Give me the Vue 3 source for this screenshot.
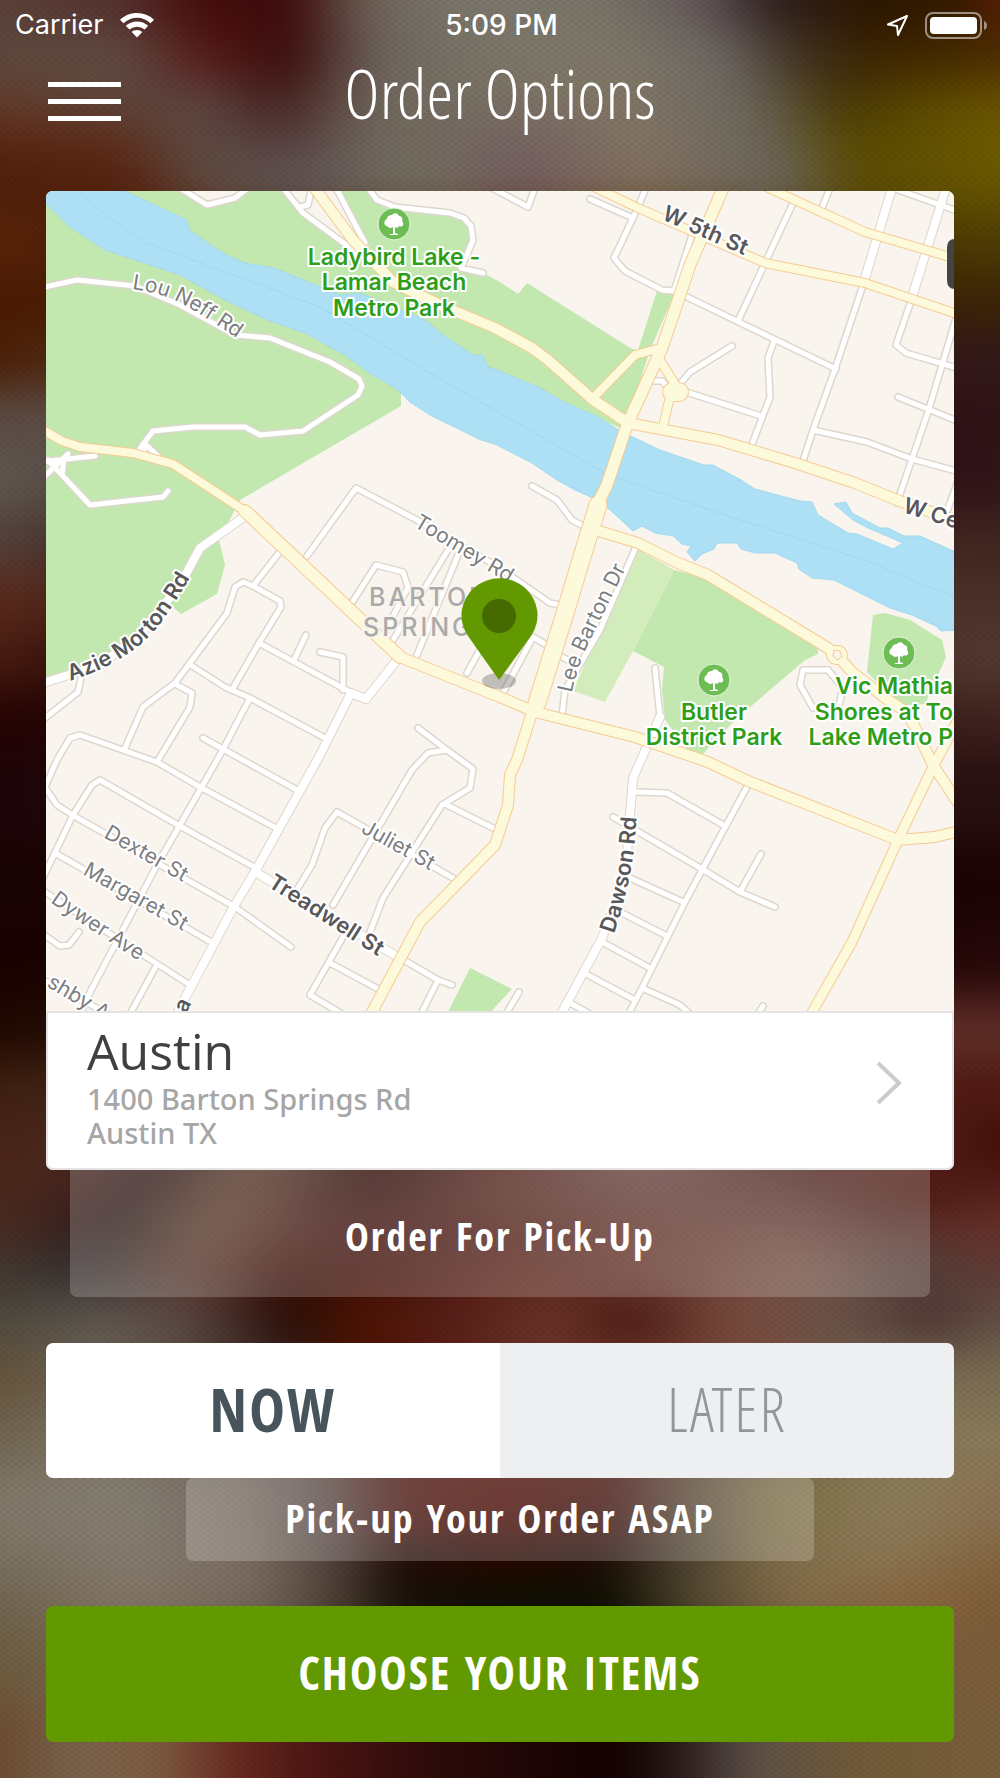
<script setup>
import { ref } from 'vue'

const when = ref('now')

// Backdrop photo colours: [band height, [[x position, colour], ...]]
const backdrop = [
  [90, [[0, '#5a4038'], [120, '#54302c'], [200, '#450c0c'], [290, '#3c0a0a'], [370, '#6e6258'], [460, '#7b766b'], [600, '#7a7468'], [700, '#625658'], [770, '#302020'], [860, '#2a1500'], [960, '#321a00'], [1000, '#5a1e05']]],
  [50, [[0, '#5c483e'], [120, '#604c42'], [200, '#581c1a'], [290, '#3a0c0a'], [380, '#6e6660'], [500, '#7b7668'], [620, '#7e7868'], [720, '#6e6864'], [800, '#403020'], [870, '#3c2400'], [1000, '#4a2c00']]],
  [40, [[0, '#643c2c'], [100, '#5e463c'], [200, '#5e4440'], [280, '#45201e'], [380, '#70685c'], [500, '#7a7264'], [620, '#827666'], [740, '#6e6860'], [840, '#463608'], [930, '#5c4800'], [1000, '#6a5200']]],
  [40, [[0, '#5c2814'], [110, '#5e2c18'], [190, '#5e4c44'], [290, '#543c3c'], [380, '#726a5e'], [520, '#746260'], [640, '#827464'], [760, '#6c665c'], [850, '#564800'], [1000, '#6e5c00']]],
  [50, [[0, '#4c1e0a'], [130, '#562210'], [210, '#604c42'], [300, '#62585a'], [420, '#747060'], [520, '#745c60'], [640, '#826f5f'], [780, '#6c665c'], [860, '#5c4c04'], [1000, '#6a5700']]],
  [60, [[0, '#5a2408'], [100, '#4c1e08'], [900, '#4a3800'], [1000, '#4f3d04']]],
  [60, [[0, '#4a1a02'], [100, '#4a1c06'], [900, '#3a2206'], [1000, '#3c2406']]],
  [60, [[0, '#4c1f05'], [100, '#50301c'], [900, '#34181c'], [1000, '#321818']]],
  [60, [[0, '#5c4a44'], [100, '#5c504c'], [900, '#301014'], [1000, '#2f1216']]],
  [60, [[0, '#605850'], [100, '#564842'], [900, '#2c1016'], [1000, '#2f1417']]],
  [60, [[0, '#54423a'], [100, '#402c2c'], [900, '#422420'], [1000, '#40241f']]],
  [60, [[0, '#5a2a1c'], [100, '#4a2418'], [900, '#4a2f29'], [1000, '#4a3029']]],
  [60, [[0, '#481c10'], [100, '#300c0a'], [900, '#50362e'], [1000, '#523830']]],
  [60, [[0, '#260302'], [100, '#200404'], [900, '#3c1e1c'], [1000, '#40221e']]],
  [90, [[0, '#1e0408'], [100, '#1e060a'], [900, '#2a1010'], [1000, '#281010']]],
  [90, [[0, '#1a0303'], [100, '#180202'], [900, '#1a0203'], [1000, '#1c0304']]],
  [70, [[0, '#180200'], [100, '#1a0300'], [900, '#220506'], [1000, '#280808']]],
  [60, [[0, '#200800'], [100, '#241008'], [900, '#602e28'], [1000, '#602e28']]],
  [60, [[0, '#40200f'], [100, '#40241c'], [900, '#501a12'], [1000, '#501a12']]],
  [50, [[0, '#4a2416'], [100, '#4a2a24'], [170, '#2c1514'], [260, '#58402e'], [370, '#280504'], [500, '#4c1c12'], [640, '#6f4a47'], [800, '#4a1d16'], [900, '#5a2820'], [1000, '#400c06']]],
  [40, [[0, '#4c281c'], [70, '#46241f'], [140, '#2c1816'], [230, '#5c3a2a'], [370, '#300a06'], [500, '#582c22'], [650, '#643e39'], [800, '#56302a'], [920, '#4c140c'], [1000, '#54201a']]],
  [40, [[0, '#4a2c22'], [60, '#38201c'], [110, '#2a1a18'], [210, '#60402e'], [340, '#421410'], [480, '#4c1c14'], [620, '#603028'], [780, '#6c443a'], [900, '#56302a'], [1000, '#6a302a']]],
  [50, [[0, '#423830'], [80, '#363131'], [190, '#5c3a2e'], [290, '#3b0c04'], [380, '#42100a'], [500, '#592318'], [620, '#643329'], [800, '#785447'], [920, '#52403a'], [1000, '#603a34']]],
  [50, [[0, '#504a3e'], [100, '#625a52'], [180, '#5c4a48'], [290, '#240c06'], [360, '#501400'], [450, '#561e18'], [550, '#6b3428'], [630, '#481610'], [730, '#784a3c'], [850, '#665248'], [930, '#4c3430'], [1000, '#645248']]],
  [60, [[0, '#65533a'], [100, '#6e6454'], [300, '#3c2420'], [360, '#4a0c00'], [550, '#6a3428'], [750, '#784a3c'], [900, '#7a6c58'], [1000, '#7a6c50']]],
  [60, [[0, '#706450'], [100, '#7c7464'], [300, '#605450'], [400, '#4a1410'], [600, '#4a1410'], [720, '#60503e'], [900, '#857856'], [1000, '#8a7a5a']]],
  [70, [[0, '#807868'], [130, '#857d72'], [250, '#766a60'], [330, '#584844'], [400, '#4a140e'], [500, '#4c0a02'], [610, '#40100a'], [690, '#584a3a'], [770, '#7e7046'], [900, '#8c7c58'], [1000, '#8a7050']]],
  [40, [[0, '#7a7060'], [130, '#857b6e'], [250, '#7c6e62'], [330, '#54443e'], [400, '#200c08'], [500, '#260400'], [600, '#1c0804'], [680, '#483e30'], [770, '#7e6c48'], [880, '#8a7654'], [1000, '#84643e']]],
  [50, [[0, '#706450'], [130, '#827565'], [260, '#74665a'], [340, '#483c30'], [400, '#140e04'], [500, '#0c1000'], [610, '#0c1000'], [700, '#5a4e34'], [800, '#846c48'], [920, '#88643c'], [1000, '#7c5c38']]],
  [70, [[0, '#6c5c3e'], [130, '#7a6a56'], [300, '#5c4038'], [500, '#180606'], [650, '#140806'], [800, '#705c40'], [1000, '#7c5c38']]],
  [140, [[0, '#6b4a30'], [70, '#78624a'], [160, '#7e5c42'], [230, '#682a20'], [320, '#4a1412'], [440, '#2c0a0a'], [620, '#120000'], [680, '#2a1a1a'], [750, '#5c5048'], [860, '#705a36'], [1000, '#7a5e3c']]],
]

const bandStyle = ([height, stops]) => ({
  flexGrow: height,
  backgroundImage: `linear-gradient(to right, ${stops
    .map(([x, colour]) => `${colour} ${(((x + 60) / 1120) * 100).toFixed(2)}%`)
    .join(', ')})`,
})

const streets = [
  'M180 188 207 205 235 198 248 188', 'M283 188 303 213 345 244 357 252', 'M311 191 308 205 300 207', 'M336 188 365 243',
  'M368 188 377 200 395 207 450 213 464 218 471 226 473 240 466 257 461 268 483 273',
  'M40 288 77 280 135 286 180 305 235 335 270 338 330 362 359 379 362 386 358 395 303 431 260 435 245 427 193 427 153 431 144 443 137 453M144 443 158 456M144 443V453',
  'M40 462 95 456M44 477 68 454M48 460 90 505 163 497 168 491M64 458 62 475',
  'M490 187 528 207 535 188', 'M590 199 633 218M646 188 633 218 614 258 625 271 662 290 674 291 692 235', 'M687 297 836 369',
  'M793 203 738 321', 'M830 188 822 208', 'M774 341 768 358 770 397 751 447', 'M732 346 690 372 680 384', 'M683 391 761 416',
  'M653 381 662 381 668 388', 'M863 285 835 369 813 430 801 467', 'M913 295 896 345 906 353 960 369', 'M898 190 960 212',
  'M960 305 928 412 897 503', 'M813 430 867 442 912 459 960 472', 'M898 397 960 422', 'M962 470 946 514',
  'M307 556 356 488 415 519 495 565 550 603 560 605', 'M279 553 253 586', 'M259 643 281 607 280 601 253 586 243 582 235 587 227 613 175 683 143 707 125 748',
  'M175 684 192 693 190 707 157 762', 'M259 643 350 692M259 643 232 690', 'M306 635 294 660', 'M320 652 343 657 343 690',
  'M189 664 225 687 250 698 325 738', 'M250 698 220 755 157 865 87 998 80 1015', 'M203 738 297 790', 'M81 678 78 692 40 722',
  'M40 798 57 760 70 738 80 735 157 762 200 787 276 828', 'M353 601 376 565 403 572 408 587 386 630', 'M448 550 393 640', 'M458 555 417 655',
  'M467 673 492 628', 'M503 693 533 637 545 644', 'M418 728 447 750 473 769 470 788 442 805 383 898 370 932', 'M447 750 428 753 412 770 333 905',
  'M343 937 310 995 342 1014', 'M330 963 380 990', 'M445 804 493 828', 'M453 878 337 812 325 828 312 865 298 888',
  'M40 780 57 805 74 816 235 907 291 947', 'M40 884 73 815 92 785 100 780 178 825 254 867', 'M55 853 213 943', 'M40 889 190 985',
  'M40 932 60 946 69 945 79 932', 'M155 968 130 1014', 'M395 955 438 980 452 985M438 980 421 1014', 'M40 978 108 1014', 'M655 668 660 717',
  'M637 792 667 793 725 826', 'M613 817 702 869 740 892 775 907', 'M748 785 702 870 685 902 642 988 628 1015', 'M761 854 740 892',
  'M630 878 683 902', 'M620 912 665 935', 'M604 943 648 967', 'M588 975 633 999', 'M570 1003 592 1015', 'M642 988 680 1005 690 1014',
  'M519 992 506 1014', 'M763 1006 758 1014', 'M532 486 557 500 572 520 585 527', 'M556 654 570 661', 'M635 549 600 630 565 690 562 716',
  'M828 670 803 670 800 685 813 708', 'M828 670 843 688 838 710',
]

const avenues = [
  'M244 517 200 548 180 585 140 635 100 665 40 684', 'M892 188 863 285', 'M946 188 912 297',
  'M397 660 366 699 351 693 320 755 257 868 233 908 183 1002 177 1014', 'M257 873 398 957', 'M660 717 633 778 630 815 625 880 602 938 560 1016',
]

const highways = [
  { w: 10, d: 'M313 186 353 240 393 282 440 305 495 328 532 348 548 360 592 399 628 423 718 440 795 463 855 483 902 502 960 522' },
  { w: 11, d: 'M724 186 690 265 662 348 627 425 607 485 598 503' },
  { w: 17, d: 'M598 505 585 547 562 623 537 703' },
  { w: 10, d: 'M535 703 517 760 510 775 508 805 495 845 420 922 371 1014' },
  { w: 8, d: 'M592 186 638 208 765 263 865 283 960 315' },
  { w: 8, d: 'M764 186 865 232 960 260' },
  { w: 8, d: 'M593 398 635 355 657 349' },
  { w: 8, d: 'M656 354 675 384 668 405 663 427' },
  { w: 8, d: 'M40 428 62 441 80 447 133 453 173 464 245 511' },
  { w: 12, d: 'M245 511 400 657' },
  { w: 10, d: 'M400 657 500 697 535 712 635 737 708 762 748 781 898 840 935 837 960 831' },
  { w: 10, d: 'M592 529 638 543 678 563 708 575 828 648 837 655 852 672 888 700 908 713 933 765 960 806' },
  { w: 9, d: 'M960 716 933 767 898 840 852 942 810 1016' },
]

const parks = [
  { x: 394, y: 224 },
  { x: 714, y: 680 },
  { x: 899, y: 653 },
]

const streetLabels = [
  { text: 'Toomey Rd', d: 'M413 526 L530 596' },
  { text: 'Lou Neff Rd', d: 'M132 289 Q165 293 190 308 T260 354' },
  { text: 'Lee Barton Dr', d: 'M572 693 Q577 665 594 632 L640 540' },
  { text: 'Dexter St', d: 'M103 837 L220 903' },
  { text: 'Margaret St', d: 'M82 874 L220 952' },
  { text: 'Dywer Ave', d: 'M50 902 Q72 918 150 968' },
  { text: 'shby A', d: 'M46 986 L120 1030' },
  { text: 'Juliet St', d: 'M360 832 L460 887' },
  { text: 'W 5th St', d: 'M661 219 L780 271', bold: true },
  { text: 'W Ce', d: 'M902 512 L990 539', bold: true },
  { text: 'Azie Morton Rd', d: 'M70 681 Q135 660 163 620 T210 540', bold: true },
  { text: 'Treadwell St', d: 'M267 886 L420 983', bold: true },
  { text: 'Dawson Rd', d: 'M614 934 Q629 890 634 850 L640 780', bold: true },
  { text: 'a', d: 'M186 1014 L196 994', bold: true },
]
</script>

<template>
  <div class="screen">
    <div class="backdrop" aria-hidden="true">
      <div class="bands">
        <div v-for="(band, i) in backdrop" :key="i" class="band" :style="bandStyle(band)"></div>
      </div>
      <div class="weave"></div>
    </div>

    <div class="status">
      <div class="status-side">
        <span>Carrier</span>
        <svg width="34" height="25" viewBox="0 0 34 25" fill="#fff">
          <path d="M17 0C10.500 0 4.600 2.500 0 6.700l3.500 3.600a19.500 19.500 0 0 1 27 0L34 6.700A25 25 0 0 0 17 0Z" />
          <path d="M17 8.500c-4.300 0-8.200 1.700-11.200 4.300l3.600 3.700a11.500 11.500 0 0 1 15.200 0l3.600-3.700A17 17 0 0 0 17 8.500Z" />
          <path d="M17 17c-2 0-3.900.7-5.300 1.900L17 24.500l5.300-5.600A8 8 0 0 0 17 17Z" />
        </svg>
      </div>
      <span class="clock">5:09 PM</span>
      <div class="status-side end">
        <svg width="23" height="23" viewBox="0 0 23 23" fill="none" stroke="#fff" stroke-width="2" stroke-linejoin="round">
          <path d="M21 2 2 10.500l9 1.500 1 9Z" />
        </svg>
        <svg width="63" height="27" viewBox="0 0 63 27">
          <rect x="1" y="1" width="55" height="25" rx="7" fill="none" stroke="#fff" stroke-opacity=".5" stroke-width="2" />
          <rect x="5" y="5" width="47" height="17" rx="4" fill="#fff" />
          <path d="M59 9c4 1 4 8 0 9Z" fill="#fff" fill-opacity=".5" />
        </svg>
      </div>
    </div>

    <header class="bar">
      <button class="menu" type="button" aria-label="Menu"><i></i><i></i><i></i></button>
      <h1>Order Options</h1>
    </header>

    <main>
      <section class="card">
        <svg class="map" viewBox="46 191 908 820" role="img" aria-label="Map of Barton Springs">
          <rect x="46" y="191" width="908" height="820" fill="#f9f4ed" />
          <g fill="#c2e8b0">
            <path d="M40 185 180 191 207 205 235 198 245 191H282L303 213 345 244 365 243 340 191H368L377 200 395 207 450 213 464 218 471 226 473 240 466 257 461 268 483 273 500 282 518 294 527 283 632 349 638 350 657 291 674 295 650 350 624 430 560 400 401 391V406L240 500 219 540 225 565 217 594 181 614 172 606 130 650 40 680Z" />
            <path d="M674 570 707 578 818 645V654L805 660 735 720 702 755 688 750 665 720 662 690 664 667 633 651Z" />
            <path d="M873 615 885 613 910 620 942 640 946 657 925 704 900 706 867 672Z" />
            <path d="M470 968 512 989 495 1007 489 1016H446Z" />
          </g>
          <path d="M636 548 674 570 633 651 605 702 573 691Z" fill="#d3ecbc" />
          <path fill="#aee0f5" stroke="#a2d9ee" d="M40 187 125 191 187 220 189 230 226 255 245 263 274 268 340 295 360 293 425 320 447 338 475 356 482 354 488 367 495 369 540 388 562 401 600 418 620 431 660 450 704 465H713L741 480 755 489 800 501 812 502 818 515 848 533 857 534 893 549 903 543 868 528 853 520 834 504 846 502 852 513 880 528H888L904 536H920L960 554V630L941 631 936 626 912 615 890 608 834 580 812 578 799 569 797 563 775 553H755L741 549 737 543H717L714 549 702 554 695 561 687 552 691 546 682 544 673 536 655 533 642 526 633 531 608 508 591 497 575 490 557 480 532 463 495 444 481 440 430 415 410 402 398 390 368 372 345 355 305 333 270 321 225 300 180 275 105 250 70 227 40 198Z" />
          <path d="M76 188 105 215 145 242 225 272 320 307 425 370 500 413 610 476 740 520 870 562 960 600" fill="none" stroke="#a0d7ec" />

          <g fill="none" stroke-linejoin="round" stroke-linecap="round">
            <g stroke="#ddd7cd">
              <path v-for="d in streets" :key="d" :d="d" stroke-width="8" />
              <path v-for="d in avenues" :key="d" :d="d" stroke-width="10" />
            </g>
            <g stroke="#fff">
              <path v-for="d in streets" :key="d" :d="d" stroke-width="5" />
              <path v-for="d in avenues" :key="d" :d="d" stroke-width="8" />
            </g>
            <g stroke="#f5cb92">
              <path v-for="h in highways" :key="h.d" :d="h.d" :stroke-width="h.w + 2" />
              <path d="M672 392h7M836 655h2" stroke-width="20" />
            </g>
            <g stroke="#fcfadb">
              <path v-for="h in highways" :key="h.d" :d="h.d" :stroke-width="h.w" />
              <path d="M672 392h7M836 655h2" stroke-width="18" />
            </g>
          </g>
          <path d="M834 650 840 651 842 657 837 660 833 656Z" fill="#f9f4ed" stroke="#f5cb92" />

          <g v-for="p in parks" :key="p.x" :transform="`translate(${p.x} ${p.y})`">
            <circle r="16" fill="#6dbd55" stroke="#e3f4da" />
            <path fill="#fff" d="M-1 10V3C-4 5-6 3-7 2-11 1-10-4-7-5-7-8-4-9-2-9 0-12 4-11 5-8 8-8 9-5 8-3 11 0 8 4 5 2 4 4 2 4 1 3V9L4 10V11H-4V10Z" />
          </g>

          <g class="park-name">
            <text x="394" y="265" text-anchor="middle">Ladybird Lake -</text>
            <text x="394" y="290" text-anchor="middle">Lamar Beach</text>
            <text x="394" y="316" text-anchor="middle">Metro Park</text>
            <text x="714" y="720" text-anchor="middle">Butler</text>
            <text x="714" y="745" text-anchor="middle">District Park</text>
            <text x="953" y="694" text-anchor="end">Vic Mathia</text>
            <text x="953" y="720" text-anchor="end">Shores at To</text>
            <text x="953" y="745" text-anchor="end">Lake Metro P</text>
          </g>
          <g class="district">
            <text x="369" y="606">BARTON</text>
            <text x="363" y="636">SPRINGS</text>
          </g>
          <g v-for="(label, i) in streetLabels" :key="label.text" class="street-name" :class="{ bold: label.bold }">
            <path :id="`street-${i}`" :d="label.d" fill="none" />
            <text><textPath :href="`#street-${i}`">{{ label.text }}</textPath></text>
          </g>

          <ellipse cx="499" cy="681" rx="17" ry="8" fill="#000" fill-opacity=".22" />
          <path d="M499 680 468 636A38 37 0 1 1 531 636Z" fill="#629900" />
          <circle cx="499" cy="616" r="17" fill="#446a00" />
          <path d="M960 239H955Q947 239 947 248V280Q947 289 955 289H960Z" fill="#444" />
        </svg>

        <a class="place" href="#location">
          <span class="place-text">
            <strong>Austin</strong>
            <span>1400 Barton Springs Rd</span>
            <span>Austin TX</span>
          </span>
          <svg width="26" height="44" viewBox="0 0 26 44" fill="none" stroke="#ccc" stroke-width="4">
            <path d="M2 2 23 22 2 42" />
          </svg>
        </a>
      </section>

      <p class="method">Order For Pick-Up</p>

      <div class="toggle" role="radiogroup" aria-label="Order time">
        <label :class="{ on: when === 'now' }"><input v-model="when" type="radio" name="when" value="now" />NOW</label>
        <label :class="{ on: when === 'later' }"><input v-model="when" type="radio" name="when" value="later" />LATER</label>
      </div>

      <p class="hint">Pick-up Your Order ASAP</p>

      <button class="choose" type="button">CHOOSE YOUR ITEMS</button>
    </main>
  </div>
</template>

<style>
body {
  margin: 0;
  background: #1a0303;
}
</style>

<style scoped>
.screen {
  position: relative;
  box-sizing: border-box;
  min-height: 100vh;
  padding-bottom: 36px;
  overflow: hidden;
  color: #fff;
  font-family: "Open Sans Condensed", "Open Sans", sans-serif;
}

.backdrop {
  position: absolute;
  inset: 0;
  overflow: hidden;
}

.bands {
  position: absolute;
  inset: -60px;
  display: flex;
  flex-direction: column;
  filter: blur(22px);
}

.band {
  flex: 1 1 0;
}

.weave {
  position: absolute;
  inset: 0;
  background-image: radial-gradient(rgba(0, 0, 0, 0.06) 1px, transparent 2px), radial-gradient(rgba(0, 0, 0, 0.06) 1px, transparent 2px);
  background-size: 8px 6px;
  background-position: 0 0, 4px 3px;
}

.status,
.bar,
main {
  position: relative;
}

.status {
  display: flex;
  align-items: center;
  height: 50px;
  padding: 0 12px 0 15px;
  font: 400 27px/30px Inter, sans-serif;
}

.status-side {
  display: flex;
  flex: 1;
  align-items: center;
  gap: 16px;
}

.end {
  justify-content: flex-end;
}

.clock {
  font-size: 28px;
  font-weight: 500;
}

.bar {
  display: grid;
  grid-template-columns: 100px 1fr 100px;
  align-items: center;
  height: 90px;
  padding: 0 48px;
}

.menu {
  display: grid;
  gap: 12px;
  width: 73px;
  margin-top: 12px;
  padding: 0;
  border: 0;
  background: none;
}

.menu i {
  height: 5px;
  background: #fff;
}

h1 {
  margin: 0;
  padding-bottom: 4px;
  font-family: "Open Sans Condensed Light", "Open Sans Condensed", "Open Sans", sans-serif;
  font-size: 68px;
  font-weight: 400;
  line-height: 80px;
  text-align: center;
  white-space: nowrap;
}

main {
  display: flex;
  flex-direction: column;
  align-items: center;
  padding: 51px 46px 0;
}

.card {
  width: 100%;
  overflow: hidden;
  border-radius: 7px;
  background: #fff;
}

.map {
  display: block;
  width: 100%;
}

.park-name {
  fill: #2f9e17;
  stroke: #fff;
  stroke-width: 4px;
  stroke-linejoin: round;
  paint-order: stroke;
  font: 600 23px Inter, sans-serif;
}

.district {
  fill: #aaa;
  stroke: #f9f4ed;
  stroke-width: 4px;
  paint-order: stroke;
  font: 500 25px Inter, sans-serif;
  letter-spacing: 3px;
}

.street-name {
  fill: #7d7d80;
  stroke: #fff;
  stroke-width: 4px;
  stroke-linejoin: round;
  paint-order: stroke;
  font: 400 21px Inter, sans-serif;
}

.street-name path {
  stroke: none;
}

.bold {
  fill: #58585a;
  font-size: 22px;
  font-weight: 600;
}

.place {
  display: flex;
  align-items: center;
  justify-content: space-between;
  box-sizing: border-box;
  height: 159px;
  padding: 0 50px 0 39px;
  border: 2px solid #e4e4e4;
  border-radius: 0 0 7px 7px;
  color: #a6a6a6;
  text-decoration: none;
}

.place svg {
  margin-top: -16px;
}

.place-text {
  display: flex;
  flex-direction: column;
  padding-bottom: 12px;
  font: 500 29px/34px "Noto Sans", sans-serif;
}

.place-text strong {
  color: #404040;
  font: 400 50px/62px "Open Sans", sans-serif;
}

.method,
.hint {
  display: flex;
  align-items: center;
  justify-content: center;
  box-sizing: border-box;
  margin: 0;
  background: rgba(255, 255, 255, 0.2);
  font-size: 40px;
  line-height: 48px;
  letter-spacing: 2px;
}

.method {
  width: calc(100% - 48px);
  height: 127px;
  padding-top: 4px;
  border-radius: 0 0 7px 7px;
}

.toggle {
  display: flex;
  width: 100%;
  height: 135px;
  margin-top: 46px;
  overflow: hidden;
  border-radius: 7px;
}

.toggle label {
  display: flex;
  flex: 1;
  align-items: center;
  justify-content: center;
  padding-bottom: 4px;
  background: #edeff1;
  color: #8f979c;
  font-family: "Open Sans Condensed Light", "Open Sans Condensed", "Open Sans", sans-serif;
  font-size: 60px;
  font-weight: 300;
  letter-spacing: 2px;
  cursor: pointer;
}

.toggle .on {
  background: #fff;
  color: #48545c;
  font-family: "Open Sans Condensed", "Open Sans", sans-serif;
  font-weight: 700;
}

.toggle input {
  position: absolute;
  opacity: 0;
}

.hint {
  min-width: 628px;
  height: 83px;
  padding-bottom: 4px;
  border-radius: 7px;
}

.choose {
  width: 100%;
  height: 136px;
  margin-top: 45px;
  padding: 0 0 4px;
  border: 0;
  border-radius: 7px;
  background: #629900;
  color: #fff;
  font-family: inherit;
  font-size: 46px;
  font-weight: 700;
  letter-spacing: 2px;
}
</style>
